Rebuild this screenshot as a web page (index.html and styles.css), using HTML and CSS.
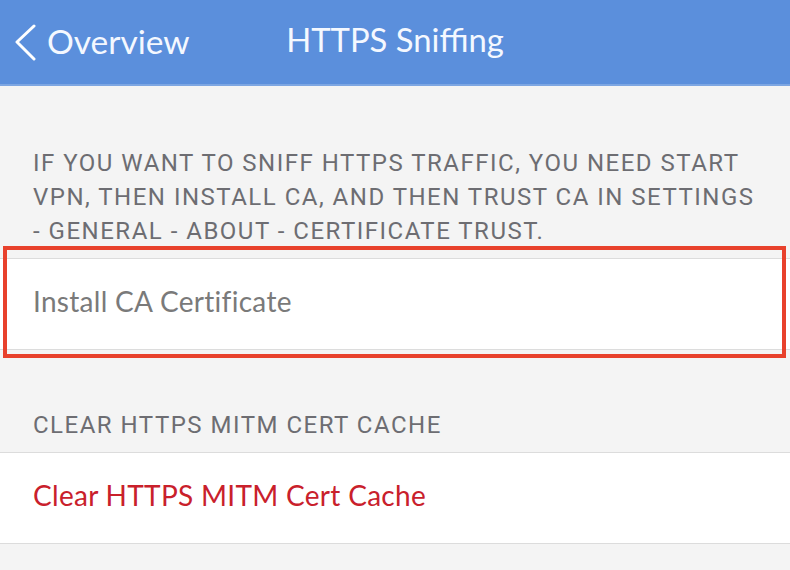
FILE: index.html
```html
<!DOCTYPE html>
<html>
<head>
<meta charset="utf-8">
<link rel="stylesheet" href="styles.css">
</head>
<body>
<header class="navbar">
  <div class="back">
    <svg class="chevron" width="24" height="40" viewBox="0 0 24 40"><path d="M20 2 L3 18 L20 35" fill="none" stroke="#fff" stroke-width="3" stroke-linecap="round" stroke-linejoin="round"/></svg>
    <span class="back-label">Overview</span>
  </div>
  <h1 class="title">HTTPS Sniffing</h1>
</header>
<main>
  <section class="group">
    <p class="group-header">IF YOU WANT TO SNIFF HTTPS TRAFFIC, YOU NEED START VPN, THEN INSTALL CA, AND THEN TRUST CA IN SETTINGS - GENERAL - ABOUT - CERTIFICATE TRUST.</p>
    <div class="cell highlighted">
      <span class="cell-label muted">Install CA Certificate</span>
      <div class="highlight-box"></div>
    </div>
  </section>
  <section class="group second">
    <p class="group-header">CLEAR HTTPS MITM CERT CACHE</p>
    <div class="cell">
      <span class="cell-label danger">Clear HTTPS MITM Cert Cache</span>
    </div>
  </section>
</main>
</body>
</html>
```
FILE: styles.css
```css
html, body {
  margin: 0;
  padding: 0;
}
body {
  width: 790px;
  height: 570px;
  overflow: hidden;
  background: #f4f4f4;
  font-family: Lato, "Open Sans", sans-serif;
}
.navbar {
  height: 86px;
  background: #5b8fdc;
  border-bottom: 2px solid #7da6e2;
  box-sizing: border-box;
  position: relative;
  display: flex;
  align-items: center;
  justify-content: center;
}
.back {
  position: absolute;
  left: 14px;
  top: 24px;
  display: flex;
  align-items: center;
  gap: 9px;
}
.chevron {
  display: block;
}
.back-label {
  color: #f4f8ff;
  font-size: 33.5px;
  line-height: 36px;
  margin-top: -6px;
}
.title {
  margin: 0;
  font-weight: normal;
  color: #f4f8ff;
  font-size: 32.8px;
  line-height: 36px;
  margin-top: -4px;
}
.group-header {
  margin: 0;
  padding: 60px 22px 10px 33px;
  font-family: Roboto, "Liberation Sans", sans-serif;
  font-size: 24px;
  letter-spacing: 1.5px;
  line-height: 34px;
  color: #6d6d72;
}
.group.second .group-header {
  padding-top: 58px;
}
.cell {
  position: relative;
  height: 90px;
  background: #fff;
  border-top: 1px solid #dcdcdc;
  border-bottom: 1px solid #dcdcdc;
  display: flex;
  align-items: center;
  padding-left: 33px;
}
.cell-label {
  font-size: 28px;
  letter-spacing: 0.3px;
  margin-top: -6px;
}
.muted {
  color: #7a7a7a;
}
.danger {
  color: #c9202b;
}
.highlight-box {
  position: absolute;
  left: 3px;
  right: 4px;
  top: -13px;
  bottom: -9px;
  border: 4px solid #e8412c;
}
```
